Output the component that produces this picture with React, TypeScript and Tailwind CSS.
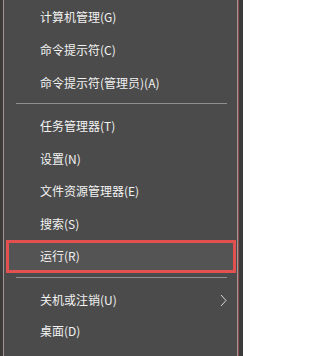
import React from 'react';

type Item = { label: string; arrow?: boolean; active?: boolean };

const groups: { items: Item[]; rowH: string }[] = [
  {
    rowH: 'h-[33px]',
    items: [
      { label: '计算机管理(G)' },
      { label: '命令提示符(C)' },
      { label: '命令提示符(管理员)(A)' },
    ],
  },
  {
    rowH: 'h-[32.5px]',
    items: [
      { label: '任务管理器(T)' },
      { label: '设置(N)' },
      { label: '文件资源管理器(E)' },
      { label: '搜索(S)' },
      { label: '运行(R)', active: true },
    ],
  },
  {
    rowH: 'h-[31px]',
    items: [{ label: '关机或注销(U)', arrow: true }, { label: '桌面(D)' }],
  },
];

const Row = ({ item, rowH }: { item: Item; rowH: string }) => {
  if (item.active) {
    return (
      <div
        className={`${rowH} mx-[2px] mr-[1px] flex items-center border-[3px] border-[#e2504f] bg-[#545454] pl-[31px]`}
      >
        <span>{item.label}</span>
      </div>
    );
  }
  return (
    <div className={`${rowH} relative flex items-center pl-[36px]`}>
      <span>{item.label}</span>
      {item.arrow && (
        <svg
          className="absolute right-[10px] top-[9px]"
          width="7"
          height="13"
          viewBox="0 0 7 13"
        >
          <polyline
            points="1,1 6,6.5 1,12"
            fill="none"
            stroke="#d8d8d8"
            strokeWidth="1"
          />
        </svg>
      )}
    </div>
  );
};

export default function App() {
  return (
    <div className="flex h-[356px] w-[243px] overflow-hidden bg-[#3b3b3b]">
      <div className="w-[3px] shrink-0 bg-[#3d3a3a]" />
      <div
        className="flex w-[235px] shrink-0 flex-col border-l border-r border-[#a49494] bg-[#4b4b4b] text-[12px] text-[#f2f2f2]"
        style={{ fontFamily: '"Noto Sans CJK SC", "Liberation Sans", sans-serif' }}
      >
        {groups.map((g, gi) => (
          <div key={gi}>
            {gi > 0 && (
              <div
                className={
                  gi === 1
                    ? 'mb-[6px] ml-[12px] mt-[4px] h-px w-[211px] bg-[#8e8e8e]'
                    : 'mb-[7px] ml-[12px] mt-[4px] h-px w-[211px] bg-[#8e8e8e]'
                }
              />
            )}
            {g.items.map((it) => (
              <Row key={it.label} item={it} rowH={g.rowH} />
            ))}
          </div>
        ))}
      </div>
      <div className="w-px shrink-0 bg-[#8a4a4a]" />
    </div>
  );
}
